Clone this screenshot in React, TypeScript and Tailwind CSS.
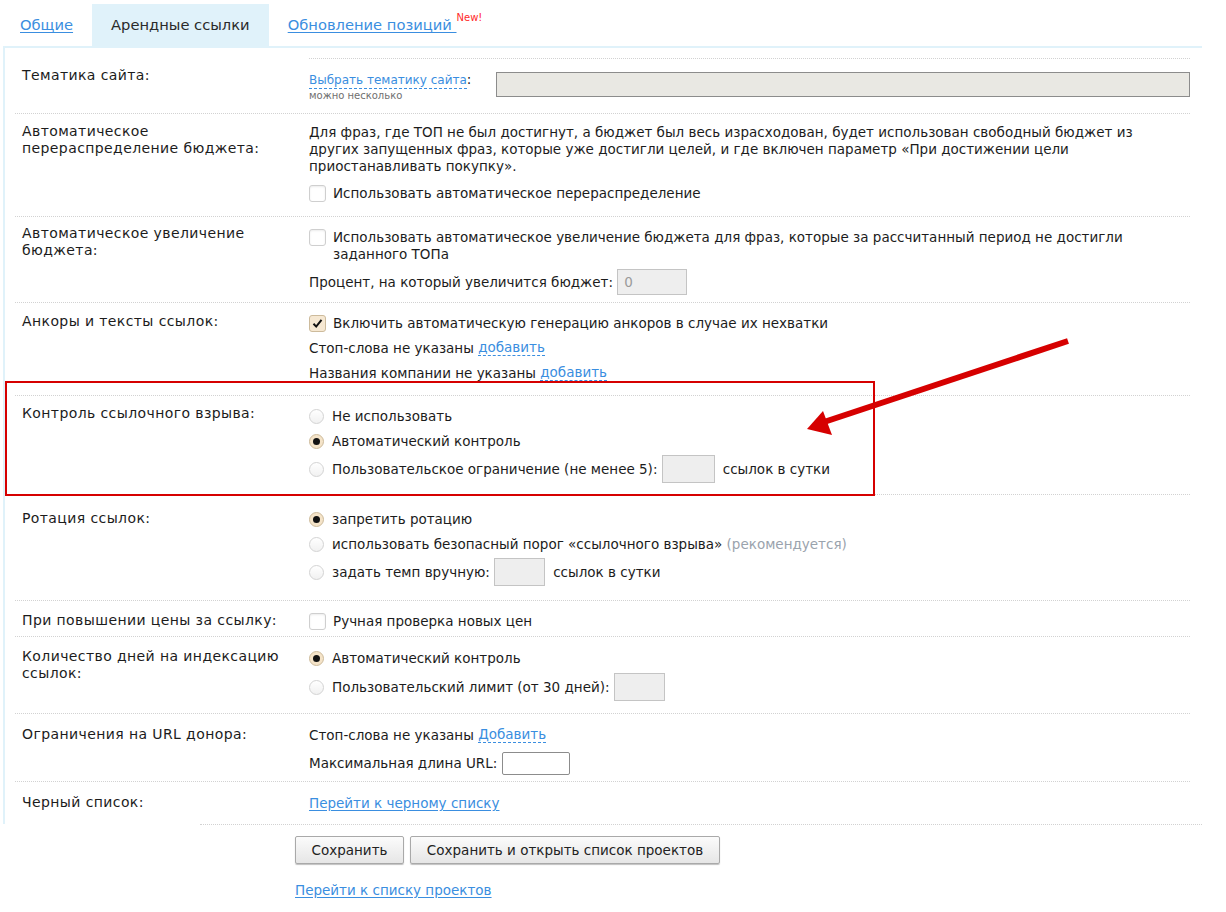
import React from "react";

const font = { fontFamily: '"DejaVu Sans", Verdana, sans-serif' };

const Link: React.FC<{ children: React.ReactNode; dashed?: boolean }> = ({ children, dashed }) => (
  <span
    className={
      dashed
        ? "text-[#3a8ee0] border-b border-dashed border-[#3a8ee0] leading-[15px] inline-block"
        : "text-[#3a8ee0] underline underline-offset-2"
    }
  >
    {children}
  </span>
);

const Checkbox: React.FC<{ checked?: boolean }> = ({ checked }) => (
  <span
    className={
      "inline-flex items-center justify-center w-[17px] h-[17px] rounded-[3px] border shrink-0 mr-[7px] " +
      (checked
        ? "bg-[#f6e8d2] border-[#cdbb9c]"
        : "bg-white border-[#cfcfcf] shadow-[inset_0_1px_2px_rgba(0,0,0,0.08)]")
    }
  >
    {checked && (
      <svg width="11" height="11" viewBox="0 0 11 11">
        <path d="M1.5 5.8 L4.2 8.6 L9.5 1.8" fill="none" stroke="#111" strokeWidth="2" />
      </svg>
    )}
  </span>
);

const Radio: React.FC<{ checked?: boolean }> = ({ checked }) => (
  <span
    className={
      "inline-flex items-center justify-center w-[15px] h-[15px] rounded-full border shrink-0 mr-[8px] " +
      (checked
        ? "bg-[#f4e3c8] border-[#cdbb9c]"
        : "bg-[linear-gradient(#fff,#f1f1f1)] border-[#d3d3d3]")
    }
  >
    {checked && <span className="w-[7px] h-[7px] rounded-full bg-[#111]" />}
  </span>
);

const Box: React.FC<{ w: string; h: string; children?: React.ReactNode }> = ({ w, h, children }) => (
  <span
    className={`inline-flex items-center pl-[6px] bg-[#eeeeee] border border-[#c4c4c4] text-[#9a9a9a] ${w} ${h}`}
  >
    {children}
  </span>
);

const Row: React.FC<{
  label: React.ReactNode;
  children: React.ReactNode;
  lt: string;
  rt: string;
  pb: string;
  first?: boolean;
}> = ({ label, children, lt, rt, pb, first }) => (
  <div className={"grid grid-cols-[294px_1fr] " + (first ? "" : "border-t border-dotted border-[#d2d2d2]")}>
    <div className={`pl-[7px] leading-[17px] text-[14px] tracking-[0.4px] ${lt}`}>{label}</div>
    <div className={`${rt} ${pb}`}>{children}</div>
  </div>
);

const Line: React.FC<{ children: React.ReactNode; h?: string; cls?: string }> = ({ children, h, cls }) => (
  <div className={`flex items-center ${h ?? "h-[24px]"} ${cls ?? ""}`}>{children}</div>
);

export default function App() {
  return (
    <div className="relative w-[1226px] h-[912px] bg-white text-[13.5px] text-[#1c1c1c]" style={font}>
      {/* tabs */}
      <div className="flex pt-[4px] pl-[1px] text-[14.7px]">
        <div className="h-[42px] flex items-center pl-[19px] pr-[19px]">
          <span className="text-[#3a8ee0] underline underline-offset-2">Общие</span>
        </div>
        <div className="h-[42px] flex items-center px-[19px] bg-[#e0f2fa] text-[#2a2a2a]">Арендные ссылки</div>
        <div className="h-[42px] flex items-center px-[19px]">
          <span className="text-[#3a8ee0] underline underline-offset-2">Обновление позиций&nbsp;</span>
          <span className="relative -top-[8px] text-[10px] text-[#ff2a2a]">New!</span>
        </div>
      </div>

      {/* settings panel */}
      <div className="ml-[3px] w-[1199px] border-l-2 border-t-2 border-[#e0f2fa] pl-[10px] pr-[12px] pt-[10px]">
        <Row first label="Тематика сайта:" lt="pt-[9px]" rt="border-t border-dotted border-[#d2d2d2] pt-[12px]" pb="pb-[11px]">
          <div className="flex items-start">
            <div className="w-[187px] leading-[17px]">
              <div>
                <span className="text-[12px]">
                  <Link dashed>Выбрать тематику сайта</Link>
                </span>
                :
              </div>
              <div className="text-[10px] leading-[13px] text-[#6f6f6f]">можно несколько</div>
            </div>
            <span className="flex-1 h-[25px] mt-[1px] bg-[#e9e8e3] border border-[#8c8c8c]" />
          </div>
        </Row>

        <Row
          label={
            <>
              Автоматическое
              <br />
              перераспределение бюджета:
            </>
          }
          lt="pt-[9px]"
          rt="pt-[10px]"
          pb="pb-[14px]"
        >
          <div className="leading-[17px] pr-[40px]">
            Для фраз, где ТОП не был достигнут, а бюджет был весь израсходован, будет использован свободный бюджет из
            других запущенных фраз, которые уже достигли целей, и где включен параметр «При достижении цели
            приостанавливать покупку».
          </div>
          <Line h="h-[18px]" cls="mt-[9px]">
            <Checkbox />
            Использовать автоматическое перераспределение
          </Line>
        </Row>

        <Row
          label={
            <>
              Автоматическое увеличение
              <br />
              бюджета:
            </>
          }
          lt="pt-[8px]"
          rt="pt-[12px]"
          pb="pb-[7px]"
        >
          <div className="flex items-start leading-[17px]">
            <Checkbox />
            <div>
              Использовать автоматическое увеличение бюджета для фраз, которые за рассчитанный период не достигли
              <br />
              заданного ТОПа
            </div>
          </div>
          <Line h="h-[26px]" cls="mt-[6px]">
            Процент, на который увеличится бюджет:&nbsp;
            <Box w="w-[70px]" h="h-[26px]">0</Box>
          </Line>
        </Row>

        <Row label="Анкоры и тексты ссылок:" lt="pt-[10px]" rt="pt-[8px]" pb="pb-[10px]">
          <div className="flex flex-col gap-[1px]">
            <Line>
              <Checkbox checked />
              Включить автоматическую генерацию анкоров в случае их нехватки
            </Line>
            <Line>
              Стоп-слова не указаны&nbsp;<Link dashed>добавить</Link>
            </Line>
            <Line>
              Названия компании не указаны&nbsp;<Link dashed>добавить</Link>
            </Line>
          </div>
        </Row>

        <Row label="Контроль ссылочного взрыва:" lt="pt-[9px]" rt="pt-[8px]" pb="pb-[11px]">
          <Line>
            <Radio />
            Не использовать
          </Line>
          <Line cls="mt-[1px]">
            <Radio checked />
            Автоматический контроль
          </Line>
          <Line h="h-[28px]" cls="mt-[2px]">
            <Radio />
            Пользовательское ограничение (не менее 5):&nbsp;
            <Box w="w-[53px]" h="h-[28px]" />
            <span className="ml-[8px]">ссылок в сутки</span>
          </Line>
        </Row>

        <Row label="Ротация ссылок:" lt="pt-[15px]" rt="pt-[12px]" pb="pb-[14px]">
          <Line>
            <Radio checked />
            запретить ротацию
          </Line>
          <Line cls="mt-[1px]">
            <Radio />
            использовать безопасный порог «ссылочного взрыва»&nbsp;
            <span className="text-[#9aa3ad]">(рекомендуется)</span>
          </Line>
          <Line h="h-[28px]" cls="mt-[2px]">
            <Radio />
            задать темп вручную:&nbsp;
            <Box w="w-[51px]" h="h-[28px]" />
            <span className="ml-[8px]">ссылок в сутки</span>
          </Line>
        </Row>

        <Row label="При повышении цены за ссылку:" lt="pt-[11px]" rt="pt-[11px]" pb="pb-[6px]">
          <Line h="h-[18px]">
            <Checkbox />
            Ручная проверка новых цен
          </Line>
        </Row>

        <Row
          label={
            <>
              Количество дней на индексацию
              <br />
              ссылок:
            </>
          }
          lt="pt-[11px]"
          rt="pt-[9px]"
          pb="pb-[12px]"
        >
          <Line>
            <Radio checked />
            Автоматический контроль
          </Line>
          <Line h="h-[28px]" cls="mt-[3px]">
            <Radio />
            Пользовательский лимит (от 30 дней):&nbsp;
            <Box w="w-[51px]" h="h-[28px]" />
          </Line>
        </Row>

        <Row label="Ограничения на URL донора:" lt="pt-[12px]" rt="pt-[9px]" pb="pb-[6px]">
          <Line>
            Стоп-слова не указаны&nbsp;<Link dashed>Добавить</Link>
          </Line>
          <Line cls="mt-[4px]">
            Максимальная длина URL:&nbsp;
            <span className="w-[68px] h-[23px] bg-white border border-[#8c8c8c] rounded-[2px]" />
          </Line>
        </Row>

        <Row label="Черный список:" lt="pt-[12px]" rt="pt-[9px]" pb="pb-[9px]">
          <Line>
            <Link>Перейти к черному списку</Link>
          </Line>
        </Row>
      </div>

      {/* actions */}
      <div className="ml-[200px] w-[1002px] border-t border-dotted border-[#d2d2d2]" />
      <div className="pl-[295px] pt-[11px] flex gap-[6px]">
        <button className="h-[28px] w-[109px] border border-[#a9a9a9] rounded-[2px] bg-[linear-gradient(#fbfbfb,#e6e6e6)] shadow-[0_1px_1px_rgba(0,0,0,0.25)] text-[#222]">
          Сохранить
        </button>
        <button className="h-[28px] w-[310px] border border-[#a9a9a9] rounded-[2px] bg-[linear-gradient(#fbfbfb,#e6e6e6)] shadow-[0_1px_1px_rgba(0,0,0,0.25)] text-[#222]">
          Сохранить и открыть список проектов
        </button>
      </div>
      <div className="pl-[295px] pt-[16px]">
        <Link>Перейти к списку проектов</Link>
      </div>

      {/* highlight frame and pointer */}
      <div className="absolute left-[5px] top-[381px] w-[870px] h-[115px] border-2 border-[#d60000] pointer-events-none" />
      <svg className="absolute left-0 top-0 pointer-events-none" width="1226" height="912">
        <line x1="1068" y1="341" x2="818" y2="424" stroke="#d60000" strokeWidth="6" />
        <polygon points="807,429 823,411 832,435" fill="#d60000" />
      </svg>
    </div>
  );
}
